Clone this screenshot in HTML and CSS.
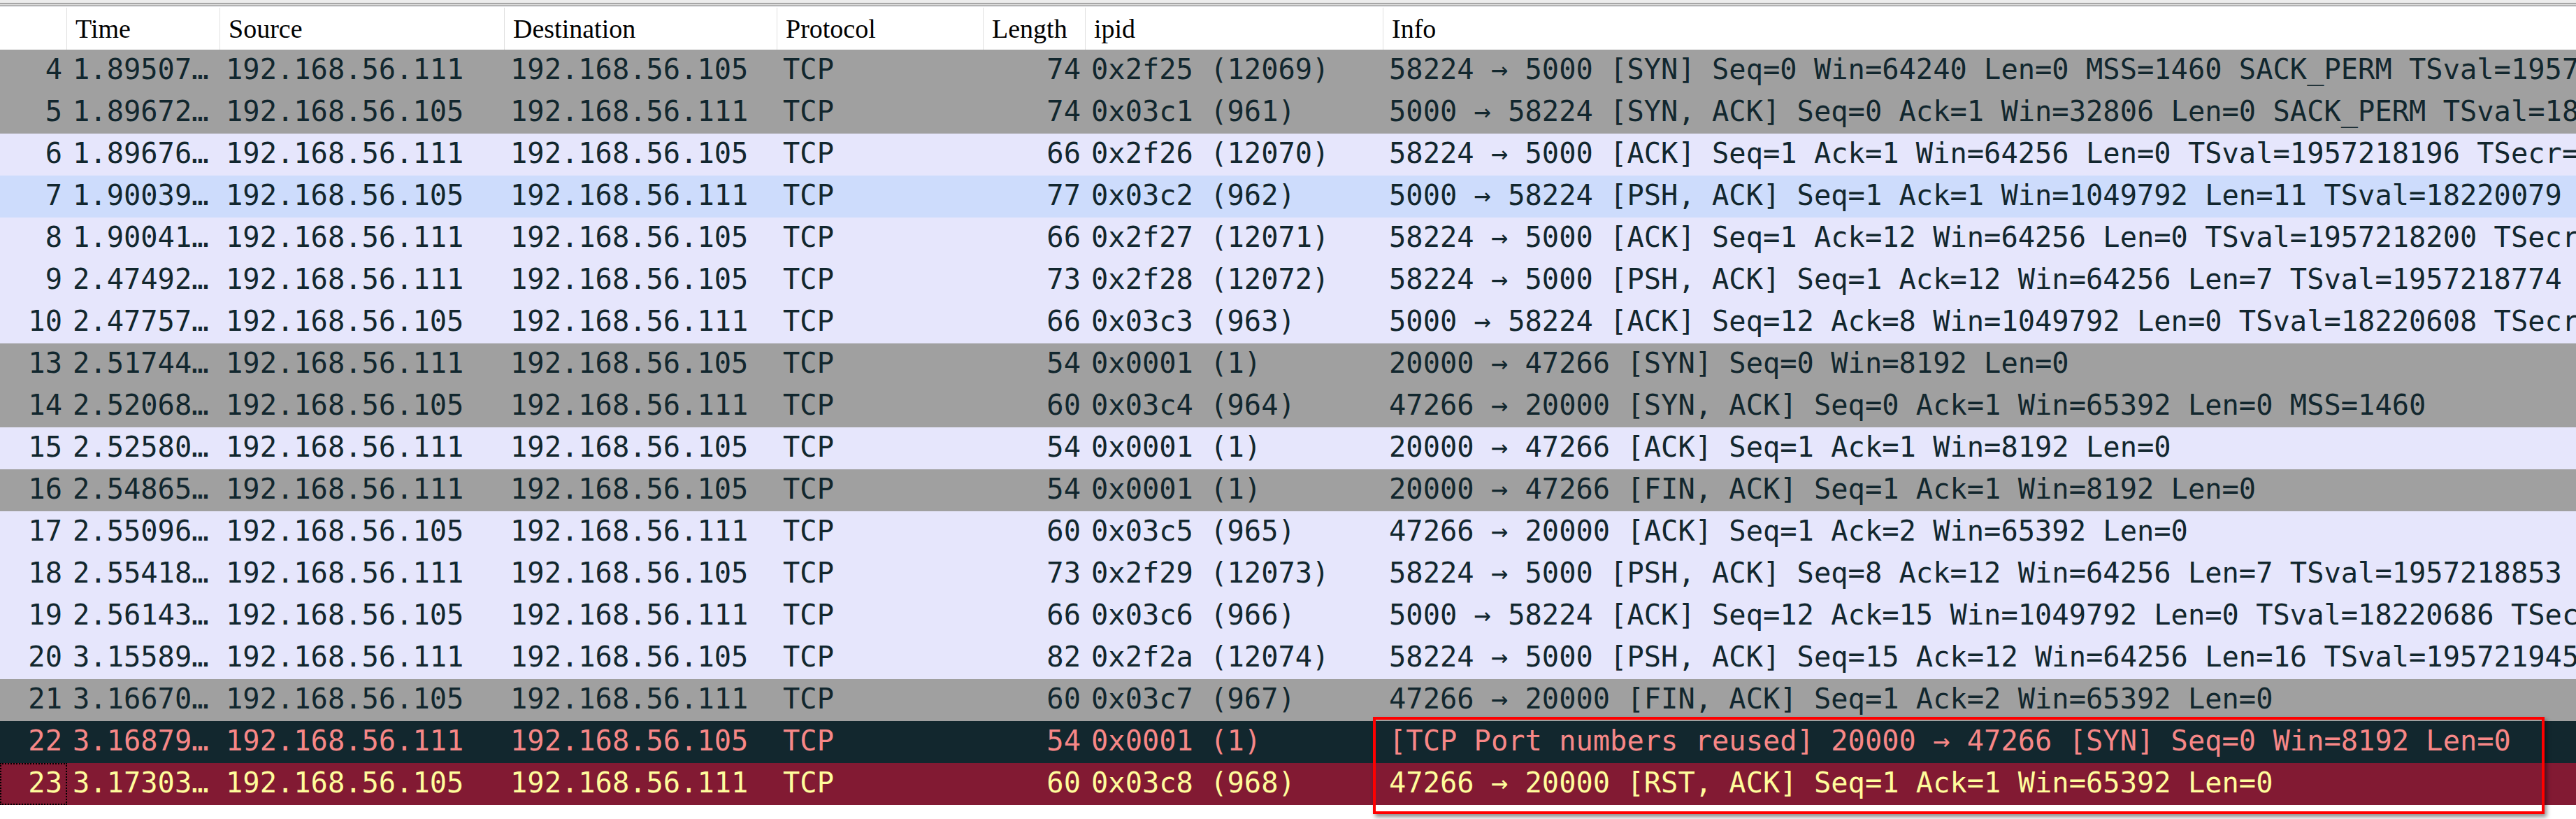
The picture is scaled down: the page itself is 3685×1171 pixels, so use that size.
FILE: index.html
```html
<!DOCTYPE html>
<html>
<head>
<meta charset="utf-8">
<link rel="stylesheet" href="styles.css">
</head>
<body>
<div class="topbar"><div class="tb1"></div><div class="tb2"></div><div class="tb3"></div><div class="tb4"></div><div class="tb5"></div></div>
<div class="table">
  <div class="head">
    <div class="h"></div>
    <div class="h">Time</div>
    <div class="h">Source</div>
    <div class="h">Destination</div>
    <div class="h">Protocol</div>
    <div class="h">Length</div>
    <div class="h">ipid</div>
    <div class="h last">Info</div>
  </div>
  <div class="row gray"><div class="c r">4</div><div class="c">1.89507…</div><div class="c">192.168.56.111</div><div class="c">192.168.56.105</div><div class="c">TCP</div><div class="c r">74</div><div class="c">0x2f25 (12069)</div><div class="c">58224 → 5000 [SYN] Seq=0 Win=64240 Len=0 MSS=1460 SACK_PERM TSval=1957218192 TSecr=0 WS=128</div></div>
  <div class="row gray"><div class="c r">5</div><div class="c">1.89672…</div><div class="c">192.168.56.105</div><div class="c">192.168.56.111</div><div class="c">TCP</div><div class="c r">74</div><div class="c">0x03c1 (961)</div><div class="c">5000 → 58224 [SYN, ACK] Seq=0 Ack=1 Win=32806 Len=0 SACK_PERM TSval=18220079 TSecr=1957218192</div></div>
  <div class="row tcp"><div class="c r">6</div><div class="c">1.89676…</div><div class="c">192.168.56.111</div><div class="c">192.168.56.105</div><div class="c">TCP</div><div class="c r">66</div><div class="c">0x2f26 (12070)</div><div class="c">58224 → 5000 [ACK] Seq=1 Ack=1 Win=64256 Len=0 TSval=1957218196 TSecr=18220079</div></div>
  <div class="row hover"><div class="c r">7</div><div class="c">1.90039…</div><div class="c">192.168.56.105</div><div class="c">192.168.56.111</div><div class="c">TCP</div><div class="c r">77</div><div class="c">0x03c2 (962)</div><div class="c">5000 → 58224 [PSH, ACK] Seq=1 Ack=1 Win=1049792 Len=11 TSval=18220079 TSecr=1957218196</div></div>
  <div class="row tcp"><div class="c r">8</div><div class="c">1.90041…</div><div class="c">192.168.56.111</div><div class="c">192.168.56.105</div><div class="c">TCP</div><div class="c r">66</div><div class="c">0x2f27 (12071)</div><div class="c">58224 → 5000 [ACK] Seq=1 Ack=12 Win=64256 Len=0 TSval=1957218200 TSecr=18220079</div></div>
  <div class="row tcp"><div class="c r">9</div><div class="c">2.47492…</div><div class="c">192.168.56.111</div><div class="c">192.168.56.105</div><div class="c">TCP</div><div class="c r">73</div><div class="c">0x2f28 (12072)</div><div class="c">58224 → 5000 [PSH, ACK] Seq=1 Ack=12 Win=64256 Len=7 TSval=1957218774 TSecr=18220079</div></div>
  <div class="row tcp"><div class="c r">10</div><div class="c">2.47757…</div><div class="c">192.168.56.105</div><div class="c">192.168.56.111</div><div class="c">TCP</div><div class="c r">66</div><div class="c">0x03c3 (963)</div><div class="c">5000 → 58224 [ACK] Seq=12 Ack=8 Win=1049792 Len=0 TSval=18220608 TSecr=1957218774</div></div>
  <div class="row gray"><div class="c r">13</div><div class="c">2.51744…</div><div class="c">192.168.56.111</div><div class="c">192.168.56.105</div><div class="c">TCP</div><div class="c r">54</div><div class="c">0x0001 (1)</div><div class="c">20000 → 47266 [SYN] Seq=0 Win=8192 Len=0</div></div>
  <div class="row gray"><div class="c r">14</div><div class="c">2.52068…</div><div class="c">192.168.56.105</div><div class="c">192.168.56.111</div><div class="c">TCP</div><div class="c r">60</div><div class="c">0x03c4 (964)</div><div class="c">47266 → 20000 [SYN, ACK] Seq=0 Ack=1 Win=65392 Len=0 MSS=1460</div></div>
  <div class="row tcp"><div class="c r">15</div><div class="c">2.52580…</div><div class="c">192.168.56.111</div><div class="c">192.168.56.105</div><div class="c">TCP</div><div class="c r">54</div><div class="c">0x0001 (1)</div><div class="c">20000 → 47266 [ACK] Seq=1 Ack=1 Win=8192 Len=0</div></div>
  <div class="row gray"><div class="c r">16</div><div class="c">2.54865…</div><div class="c">192.168.56.111</div><div class="c">192.168.56.105</div><div class="c">TCP</div><div class="c r">54</div><div class="c">0x0001 (1)</div><div class="c">20000 → 47266 [FIN, ACK] Seq=1 Ack=1 Win=8192 Len=0</div></div>
  <div class="row tcp"><div class="c r">17</div><div class="c">2.55096…</div><div class="c">192.168.56.105</div><div class="c">192.168.56.111</div><div class="c">TCP</div><div class="c r">60</div><div class="c">0x03c5 (965)</div><div class="c">47266 → 20000 [ACK] Seq=1 Ack=2 Win=65392 Len=0</div></div>
  <div class="row tcp"><div class="c r">18</div><div class="c">2.55418…</div><div class="c">192.168.56.111</div><div class="c">192.168.56.105</div><div class="c">TCP</div><div class="c r">73</div><div class="c">0x2f29 (12073)</div><div class="c">58224 → 5000 [PSH, ACK] Seq=8 Ack=12 Win=64256 Len=7 TSval=1957218853 TSecr=18220608</div></div>
  <div class="row tcp"><div class="c r">19</div><div class="c">2.56143…</div><div class="c">192.168.56.105</div><div class="c">192.168.56.111</div><div class="c">TCP</div><div class="c r">66</div><div class="c">0x03c6 (966)</div><div class="c">5000 → 58224 [ACK] Seq=12 Ack=15 Win=1049792 Len=0 TSval=18220686 TSecr=1957218853</div></div>
  <div class="row tcp"><div class="c r">20</div><div class="c">3.15589…</div><div class="c">192.168.56.111</div><div class="c">192.168.56.105</div><div class="c">TCP</div><div class="c r">82</div><div class="c">0x2f2a (12074)</div><div class="c">58224 → 5000 [PSH, ACK] Seq=15 Ack=12 Win=64256 Len=16 TSval=1957219454 TSecr=18220686</div></div>
  <div class="row gray"><div class="c r">21</div><div class="c">3.16670…</div><div class="c">192.168.56.105</div><div class="c">192.168.56.111</div><div class="c">TCP</div><div class="c r">60</div><div class="c">0x03c7 (967)</div><div class="c">47266 → 20000 [FIN, ACK] Seq=1 Ack=2 Win=65392 Len=0</div></div>
  <div class="row bad"><div class="c r">22</div><div class="c">3.16879…</div><div class="c">192.168.56.111</div><div class="c">192.168.56.105</div><div class="c">TCP</div><div class="c r">54</div><div class="c">0x0001 (1)</div><div class="c">[TCP Port numbers reused] 20000 → 47266 [SYN] Seq=0 Win=8192 Len=0</div></div>
  <div class="row rst"><div class="c r focus">23</div><div class="c">3.17303…</div><div class="c">192.168.56.105</div><div class="c">192.168.56.111</div><div class="c">TCP</div><div class="c r">60</div><div class="c">0x03c8 (968)</div><div class="c">47266 → 20000 [RST, ACK] Seq=1 Ack=1 Win=65392 Len=0</div></div>
</div>
<div class="highlight"></div>
</body>
</html>
```
FILE: styles.css
```css
html, body {
  margin: 0;
  padding: 0;
  background: #ffffff;
  width: 3685px;
  height: 1171px;
  overflow: hidden;
  position: relative;
}
.topbar { display: flex; flex-direction: column; }
.tb1 { height: 4px; background: #ececec; }
.tb2 { height: 2px; background: #a6a6a6; }
.tb3 { height: 1px; background: #dedede; }
.tb4 { height: 2px; background: #b2b2b2; }
.tb5 { height: 1px; background: #eef0f3; }
.table { display: flex; flex-direction: column; }
.head, .row {
  display: grid;
  grid-template-columns: 96px 219px 407px 390px 295px 146px 426px 1fr;
}
.head {
  height: 61px;
  background: #ffffff;
}
.h {
  box-sizing: border-box;
  border-right: 1px solid #e0e0e0;
  margin-top: 1px;
  height: 60px;
  padding-left: 12px;
  font-family: "Liberation Serif", serif;
  font-size: 38px;
  line-height: 60px;
  color: #000000;
  white-space: nowrap;
  overflow: hidden;
}
.h.last { border-right: none; }
.row {
  height: 60px;
  font-family: "DejaVu Sans Mono", monospace;
  font-size: 40.4px;
  color: #12272e;
}
.c {
  box-sizing: border-box;
  height: 60px;
  line-height: 56px;
  padding: 0 7px 4px 8px;
  white-space: nowrap;
  overflow: hidden;
}
.c.r { text-align: right; }
.gray { background: #a0a0a0; }
.tcp { background: #e6e6fc; }
.hover { background: #cddcfc; }
.bad { background: #12272e; color: #f78787; }
.rst { background: #821a33; color: #fffc9c; }
.focus {
  outline: 2px dotted #000000;
  outline-offset: -2px;
}
.highlight {
  position: absolute;
  left: 1964px;
  top: 1025px;
  width: 1676px;
  height: 139px;
  box-sizing: border-box;
  border: 4px solid #ff0000;
  box-shadow: 3px 4px 6px rgba(0, 0, 0, 0.45);
}
```
